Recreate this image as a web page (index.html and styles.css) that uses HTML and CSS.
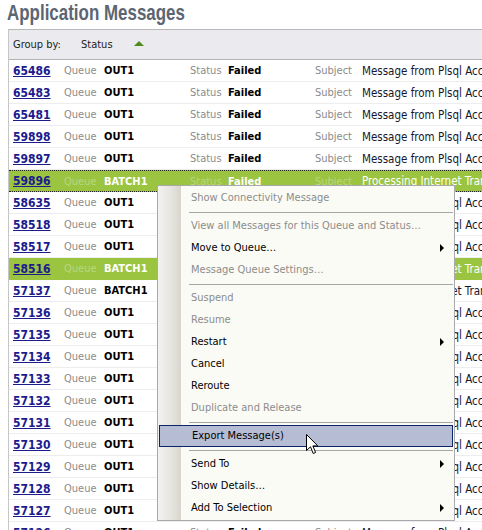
FILE: index.html
```html
<!DOCTYPE html>
<html lang="en">
<head>
    <meta charset="UTF-8">
    <title>Application Messages</title>
    <link rel="stylesheet" href="styles.css">
</head>
<body>
    <h1 class="page-title"><span class="title-text">Application Messages</span></h1>

    <div class="grid-panel">
        <div class="group-bar">
            <span class="group-label">Group by:</span>
            <span class="group-field">Status</span>
            <span class="sort-arrow"></span>
        </div>

        <div class="msg-row"><a class="msg-id" href="#">65486</a><span class="lbl">Queue</span><b class="val">OUT1</b><span class="lbl">Status</span><b class="val">Failed</b><span class="lbl">Subject</span><span class="subj">Message from Plsql Account Service</span></div>
        <div class="msg-row"><a class="msg-id" href="#">65483</a><span class="lbl">Queue</span><b class="val">OUT1</b><span class="lbl">Status</span><b class="val">Failed</b><span class="lbl">Subject</span><span class="subj">Message from Plsql Account Service</span></div>
        <div class="msg-row"><a class="msg-id" href="#">65481</a><span class="lbl">Queue</span><b class="val">OUT1</b><span class="lbl">Status</span><b class="val">Failed</b><span class="lbl">Subject</span><span class="subj">Message from Plsql Account Service</span></div>
        <div class="msg-row"><a class="msg-id" href="#">59898</a><span class="lbl">Queue</span><b class="val">OUT1</b><span class="lbl">Status</span><b class="val">Failed</b><span class="lbl">Subject</span><span class="subj">Message from Plsql Account Service</span></div>
        <div class="msg-row"><a class="msg-id" href="#">59897</a><span class="lbl">Queue</span><b class="val">OUT1</b><span class="lbl">Status</span><b class="val">Failed</b><span class="lbl">Subject</span><span class="subj">Message from Plsql Account Service</span></div>
        <div class="msg-row selected focused"><a class="msg-id" href="#">59896</a><span class="lbl">Queue</span><b class="val">BATCH1</b><span class="lbl">Status</span><b class="val">Failed</b><span class="lbl">Subject</span><span class="subj">Processing Internet Transaction</span></div>
        <div class="msg-row"><a class="msg-id" href="#">58635</a><span class="lbl">Queue</span><b class="val">OUT1</b><span class="lbl">Status</span><b class="val">Failed</b><span class="lbl">Subject</span><span class="subj">Message from Plsql Account Service</span></div>
        <div class="msg-row"><a class="msg-id" href="#">58518</a><span class="lbl">Queue</span><b class="val">OUT1</b><span class="lbl">Status</span><b class="val">Failed</b><span class="lbl">Subject</span><span class="subj">Message from Plsql Account Service</span></div>
        <div class="msg-row"><a class="msg-id" href="#">58517</a><span class="lbl">Queue</span><b class="val">OUT1</b><span class="lbl">Status</span><b class="val">Failed</b><span class="lbl">Subject</span><span class="subj">Message from Plsql Account Service</span></div>
        <div class="msg-row selected"><a class="msg-id" href="#">58516</a><span class="lbl">Queue</span><b class="val">BATCH1</b><span class="lbl">Status</span><b class="val">Failed</b><span class="lbl">Subject</span><span class="subj">Processing Internet Transaction</span></div>
        <div class="msg-row"><a class="msg-id" href="#">57137</a><span class="lbl">Queue</span><b class="val">BATCH1</b><span class="lbl">Status</span><b class="val">Failed</b><span class="lbl">Subject</span><span class="subj">Processing Internet Transaction</span></div>
        <div class="msg-row"><a class="msg-id" href="#">57136</a><span class="lbl">Queue</span><b class="val">OUT1</b><span class="lbl">Status</span><b class="val">Failed</b><span class="lbl">Subject</span><span class="subj">Message from Plsql Account Service</span></div>
        <div class="msg-row"><a class="msg-id" href="#">57135</a><span class="lbl">Queue</span><b class="val">OUT1</b><span class="lbl">Status</span><b class="val">Failed</b><span class="lbl">Subject</span><span class="subj">Message from Plsql Account Service</span></div>
        <div class="msg-row"><a class="msg-id" href="#">57134</a><span class="lbl">Queue</span><b class="val">OUT1</b><span class="lbl">Status</span><b class="val">Failed</b><span class="lbl">Subject</span><span class="subj">Message from Plsql Account Service</span></div>
        <div class="msg-row"><a class="msg-id" href="#">57133</a><span class="lbl">Queue</span><b class="val">OUT1</b><span class="lbl">Status</span><b class="val">Failed</b><span class="lbl">Subject</span><span class="subj">Message from Plsql Account Service</span></div>
        <div class="msg-row"><a class="msg-id" href="#">57132</a><span class="lbl">Queue</span><b class="val">OUT1</b><span class="lbl">Status</span><b class="val">Failed</b><span class="lbl">Subject</span><span class="subj">Message from Plsql Account Service</span></div>
        <div class="msg-row"><a class="msg-id" href="#">57131</a><span class="lbl">Queue</span><b class="val">OUT1</b><span class="lbl">Status</span><b class="val">Failed</b><span class="lbl">Subject</span><span class="subj">Message from Plsql Account Service</span></div>
        <div class="msg-row"><a class="msg-id" href="#">57130</a><span class="lbl">Queue</span><b class="val">OUT1</b><span class="lbl">Status</span><b class="val">Failed</b><span class="lbl">Subject</span><span class="subj">Message from Plsql Account Service</span></div>
        <div class="msg-row"><a class="msg-id" href="#">57129</a><span class="lbl">Queue</span><b class="val">OUT1</b><span class="lbl">Status</span><b class="val">Failed</b><span class="lbl">Subject</span><span class="subj">Message from Plsql Account Service</span></div>
        <div class="msg-row"><a class="msg-id" href="#">57128</a><span class="lbl">Queue</span><b class="val">OUT1</b><span class="lbl">Status</span><b class="val">Failed</b><span class="lbl">Subject</span><span class="subj">Message from Plsql Account Service</span></div>
        <div class="msg-row"><a class="msg-id" href="#">57127</a><span class="lbl">Queue</span><b class="val">OUT1</b><span class="lbl">Status</span><b class="val">Failed</b><span class="lbl">Subject</span><span class="subj">Message from Plsql Account Service</span></div>
        <div class="msg-row"><a class="msg-id" href="#">57126</a><span class="lbl">Queue</span><b class="val">OUT1</b><span class="lbl">Status</span><b class="val">Failed</b><span class="lbl">Subject</span><span class="subj">Message from Plsql Account Service</span></div>
    </div>

    <!-- right-click menu over the list -->
    <div class="ctx-menu">
        <div class="ctx-item disabled">Show Connectivity Message</div>
        <div class="ctx-sep"></div>
        <div class="ctx-item disabled">View all Messages for this Queue and Status…</div>
        <div class="ctx-item has-sub">Move to Queue…</div>
        <div class="ctx-item disabled">Message Queue Settings…</div>
        <div class="ctx-sep"></div>
        <div class="ctx-item disabled">Suspend</div>
        <div class="ctx-item disabled">Resume</div>
        <div class="ctx-item has-sub">Restart</div>
        <div class="ctx-item">Cancel</div>
        <div class="ctx-item">Reroute</div>
        <div class="ctx-item disabled">Duplicate and Release</div>
        <div class="ctx-sep"></div>
        <div class="ctx-item hover">Export Message(s)</div>
        <div class="ctx-sep"></div>
        <div class="ctx-item has-sub">Send To</div>
        <div class="ctx-item">Show Details…</div>
        <div class="ctx-item has-sub">Add To Selection</div>
    </div>

    <svg class="mouse-cursor" width="13" height="21" viewBox="0 0 13 21">
        <path d="M0.5 0.5 L0.5 16.5 L4.5 12.8 L7.2 19.5 L9.6 18.5 L6.9 11.9 L11.8 11.9 Z" fill="#fff" stroke="#000" stroke-width="1" stroke-linejoin="miter"/>
    </svg>
</body>
</html>
```

FILE: styles.css
```css
body {
    margin: 0;
    width: 482px;
    height: 530px;
    overflow: hidden;
    position: relative;
    background: #fff;
    font-family: "DejaVu Sans Condensed", "DejaVu Sans", sans-serif;
    font-stretch: condensed;
    font-size: 11px;
    color: #000;
}

.page-title {
    margin: 0;
    height: 29px;
    padding-left: 7px;
    font-family: "Liberation Sans", Arial, sans-serif;
    font-size: 22px;
    line-height: 25px;
    font-weight: bold;
    color: #5c6672;
    white-space: nowrap;
}

/* no narrow face installed, so squeeze the regular bold one */
.title-text {
    display: inline-block;
    transform: scaleX(0.77);
    transform-origin: left center;
}

.grid-panel {
    margin-left: 8px;
    width: 640px;
    border-left: 1px solid #c6c6c6;
    border-top: 1px solid #b8b8b8;
}

.group-bar {
    height: 29px;
    display: flex;
    align-items: center;
    padding-left: 4px;
    background: #ebebef;
    border-bottom: 1px solid #b2b2b2;
    color: #1c1c1c;
}

.group-label {
    width: 68px;
}

.sort-arrow {
    margin-left: 21px;
    margin-top: -2px;
    width: 0;
    height: 0;
    border-left: 5px solid transparent;
    border-right: 5px solid transparent;
    border-bottom: 5px solid #4f8a1c;
}

.msg-row {
    box-sizing: border-box;
    height: 22px;
    display: grid;
    grid-template-columns: 51px 40px 86px 38px 87px 47px auto;
    align-items: center;
    padding-left: 4px;
    border-bottom: 1px solid #ededed;
    white-space: nowrap;
}

.msg-id {
    color: #1b1b8e;
    font-weight: bold;
    font-size: 12px;
    text-decoration: underline;
}

.lbl {
    color: #8b8b8b;
}

.val {
    font-weight: bold;
}

.subj {
    color: #16162c;
    font-size: 11.5px;
}

.selected {
    background: #9bc441;
    border-bottom-color: #9bc441;
}

.selected .lbl {
    color: #b9d680;
}

.selected .val,
.selected .subj {
    color: #fff;
}

.focused {
    border-top: 1px dotted #222;
    border-bottom: 1px dotted #222;
}

.ctx-menu {
    position: absolute;
    left: 157px;
    top: 185px;
    box-sizing: border-box;
    width: 298px;
    padding: 1px 0;
    border: 1px solid #a9a9ad;
    background: linear-gradient(to right, #f3f2ef 0, #e8e6e1 12px, #d8d5cd 23px, #fbfbf6 23px);
    white-space: nowrap;
}

.ctx-item {
    position: relative;
    box-sizing: border-box;
    height: 22px;
    line-height: 22px;
    padding-left: 33px;
}

.ctx-item.disabled {
    color: #8c8c8c;
}

.ctx-item.has-sub::after {
    content: "";
    position: absolute;
    right: 10px;
    top: 7px;
    border-left: 4px solid #000;
    border-top: 4px solid transparent;
    border-bottom: 4px solid transparent;
}

.ctx-item.hover {
    margin: 0 1px;
    padding-left: 32px;
    line-height: 20px;
    background: #b6bcd3;
    border: 1px solid #0c2569;
}

.ctx-sep {
    height: 1px;
    margin: 3px 1px 2px 31px;
    background: #a6a6a6;
}

.mouse-cursor {
    position: absolute;
    left: 306px;
    top: 434px;
}
```
